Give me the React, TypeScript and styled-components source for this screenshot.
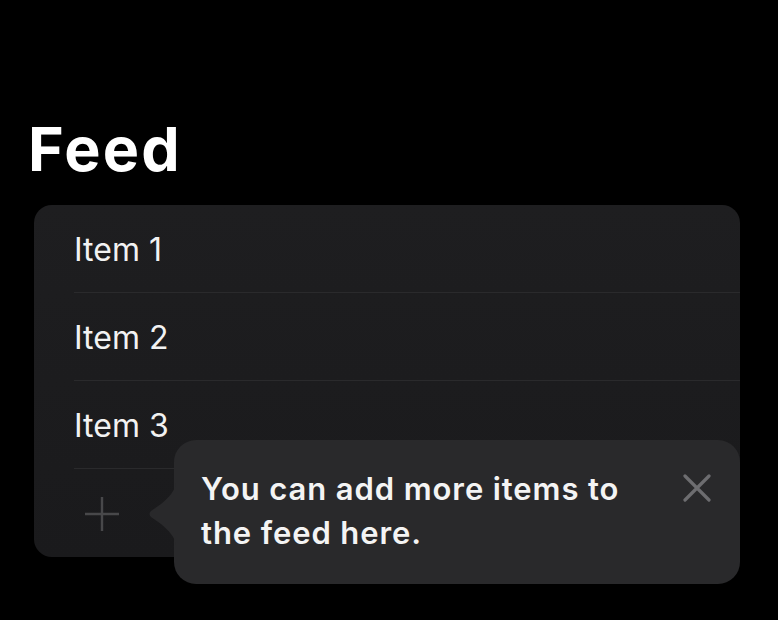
import React from "react";
import styled, { createGlobalStyle } from "styled-components";

const Global = createGlobalStyle`
  html, body { margin: 0; padding: 0; background: #000; }
  body { font-family: Inter, "Noto Sans", sans-serif; -webkit-font-smoothing: antialiased; }
`;

const Page = styled.div`
  width: 778px;
  height: 620px;
  background: #000;
  padding: 108px 38px 0 34px;
  box-sizing: border-box;
  overflow: hidden;
`;

const Title = styled.h1`
  margin: 0 0 14px -6px;
  font-size: 61px;
  line-height: 83px;
  font-weight: 700;
  color: #fff;
  letter-spacing: 2.2px;
`;

const Stage = styled.div`
  position: relative;
`;

const Card = styled.div`
  border-radius: 18px;
  background: linear-gradient(180deg, #1e1e20 0%, #1a1a1c 100%);
  overflow: hidden;
`;

const Row = styled.div<{ $last?: boolean }>`
  height: 88px;
  margin-left: 40px;
  padding-top: 2px;
  display: flex;
  align-items: center;
  box-sizing: border-box;
  border-bottom: ${(p) => (p.$last ? "none" : "1.5px solid #2a2a2c")};
  font-size: 32px;
  color: #f2f2f2;
  letter-spacing: 0;
`;

const AddButton = styled.div`
  width: 34px;
  height: 34px;
  margin-left: 11px;
  display: flex;
  align-items: center;
  justify-content: center;
`;

const Tooltip = styled.div`
  position: absolute;
  left: 140px;
  top: 235px;
  width: 566px;
  height: 144px;
  box-sizing: border-box;
  border-radius: 22px;
  background: #29292b;
  padding: 27px 29px 0 27px;
  display: flex;
  align-items: flex-start;
  justify-content: space-between;
`;

const Arrow = styled.svg`
  position: absolute;
  left: -26px;
  top: 43px;
`;

const TipText = styled.p`
  margin: 0;
  font-size: 31px;
  line-height: 44px;
  font-weight: 600;
  color: #f4f4f4;
  letter-spacing: 0.9px;
`;

const Close = styled.button`
  background: none;
  border: none;
  padding: 0;
  margin-top: 7px;
  width: 28px;
  height: 28px;
  display: flex;
  align-items: center;
  justify-content: center;
`;

export default function App() {
  return (
    <Page>
      <Global />
      <Title>Feed</Title>
      <Stage>
        <Card>
          <Row>Item 1</Row>
          <Row>Item 2</Row>
          <Row>Item 3</Row>
          <Row $last>
            <AddButton>
              <svg width="34" height="34" viewBox="0 0 34 34">
                <path d="M17 0V34M0 17H34" stroke="#48484a" strokeWidth="2.4" />
              </svg>
            </AddButton>
          </Row>
        </Card>
        <Tooltip>
          <Arrow width="28" height="62" viewBox="0 0 28 62">
            <path
              d="M28 0 C27 8 21 14 13 21 L3 28 Q0 31 3 34 L13 41 C21 48 27 54 28 62 Z"
              fill="#29292b"
            />
          </Arrow>
          <TipText>
            You can add more items to
            <br />
            the feed here.
          </TipText>
          <Close aria-label="Close">
            <svg width="28" height="28" viewBox="0 0 28 28">
              <path d="M2 2L26 26M26 2L2 26" stroke="#6d6d70" strokeWidth="3.2" strokeLinecap="round" />
            </svg>
          </Close>
        </Tooltip>
      </Stage>
    </Page>
  );
}
